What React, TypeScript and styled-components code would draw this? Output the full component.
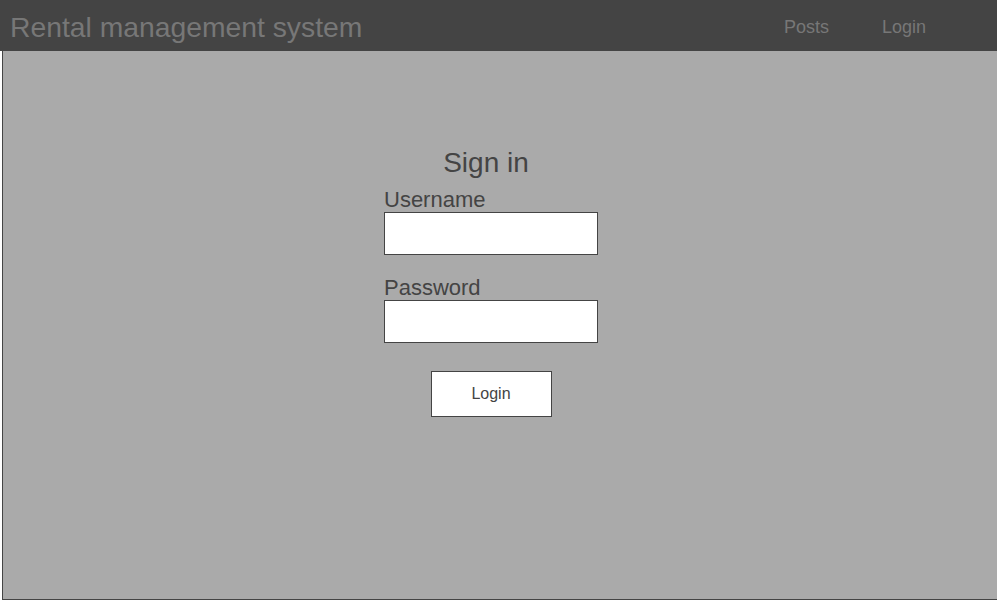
import React from 'react'
import styled, { createGlobalStyle } from 'styled-components'

const GlobalStyle = createGlobalStyle`
  * {
    box-sizing: border-box;
  }

  html,
  body {
    margin: 0;
    padding: 0;
    overflow: hidden;
    background-color: #ffffff;
    font-family: 'Liberation Sans', Arial, sans-serif;
  }
`

const Header = styled.header`
  display: flex;
  align-items: center;
  height: 51px;
  padding: 4px 0 0 10px;
  background-color: #444444;
`

const Brand = styled.div`
  flex: 1;
  margin-bottom: 2px;
  font-size: 28.3px;
  line-height: 32px;
  color: #777777;
`

const Nav = styled.nav`
  display: flex;
  gap: 53px;
  margin: 0 71px 2px 0;
`

const NavLink = styled.a`
  font-size: 18px;
  line-height: 22px;
  color: #777777;
  text-decoration: none;
  cursor: pointer;
`

const Main = styled.main`
  display: flex;
  flex-direction: column;
  align-items: center;
  width: calc(100% - 2px);
  height: 549px;
  margin-left: 2px;
  padding: 96px 18px 0 0;
  background-color: #aaaaaa;
  border-left: 1px solid #444444;
  border-bottom: 1px solid #444444;
`

const Title = styled.h1`
  margin: 0 10px 7px 0;
  font-size: 28px;
  font-weight: normal;
  line-height: 32px;
  color: #444444;
`

const Form = styled.form`
  display: flex;
  flex-direction: column;
  width: 214px;
`

const Field = styled.div<{ $gap: number }>`
  display: flex;
  flex-direction: column;
  margin-bottom: ${(p) => p.$gap}px;
`

const Label = styled.label`
  padding-top: 2px;
  font-size: 22px;
  line-height: 24px;
  color: #444444;
`

const Input = styled.input`
  width: 214px;
  height: 43px;
  margin: 0;
  padding: 0 8px;
  background-color: #ffffff;
  border: 1px solid #444444;
  border-radius: 0;
  font-family: 'Liberation Sans', Arial, sans-serif;
  font-size: 16px;
  outline: none;
`

const Button = styled.button`
  align-self: center;
  width: 121px;
  height: 46px;
  background-color: #ffffff;
  border: 1px solid #444444;
  border-radius: 0;
  font-family: 'Liberation Sans', Arial, sans-serif;
  font-size: 16px;
  color: #444444;
  cursor: pointer;
`

function App() {
  return (
    <>
      <GlobalStyle />
      <Header>
        <Brand>Rental management system</Brand>
        <Nav>
          <NavLink>Posts</NavLink>
          <NavLink>Login</NavLink>
        </Nav>
      </Header>
      <Main>
        <Title>Sign in</Title>
        <Form onSubmit={(e) => e.preventDefault()}>
          <Field $gap={19}>
            <Label htmlFor="username">Username</Label>
            <Input id="username" type="text" />
          </Field>
          <Field $gap={28}>
            <Label htmlFor="password">Password</Label>
            <Input id="password" type="password" />
          </Field>
          <Button type="submit">Login</Button>
        </Form>
      </Main>
    </>
  )
}

export default App
